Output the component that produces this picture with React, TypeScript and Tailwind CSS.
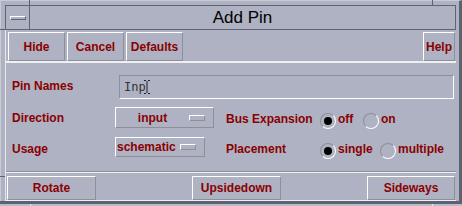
import React from "react";

const font = { fontFamily: '"Liberation Sans", Arial, sans-serif' };

function Btn({ label, className }: { label: string; className: string }) {
  return (
    <div
      className={`flex items-center justify-center border border-t-white border-l-white border-r-[#8e9099] border-b-[#8e9099] text-[12px] font-bold text-[#8b0000] ${className}`}
    >
      {label}
    </div>
  );
}

function OptionMenu({ label, className, center }: { label: string; className: string; center?: boolean }) {
  return (
    <div
      className={`flex items-center border border-t-white border-l-white border-r-[#8e9099] border-b-[#8e9099] text-[12px] font-bold text-[#8b0000] ${className}`}
    >
      <span className={center ? "flex-1 text-center" : "flex-1 pl-[1px]"}>{label}</span>
      <span className="mr-[8px] h-[6px] w-[16px] border border-t-white border-l-white border-r-[#8e9099] border-b-[#8e9099]" />
    </div>
  );
}

function Radio({ label, on, className }: { label: string; on?: boolean; className?: string }) {
  return (
    <div className={`flex items-start ${className ?? ""}`}>
      <span className="mt-[1px] flex h-[16px] w-[16px] items-center justify-center rounded-full border border-t-[#8e9099] border-l-[#8e9099] border-r-white border-b-white">
        {on ? <span className="h-[8px] w-[8px] rounded-full bg-black" /> : null}
      </span>
      <span className="ml-[2px] text-[12px] leading-[14px] font-bold text-[#8b0000]">{label}</span>
    </div>
  );
}

const label = "text-[12px] leading-[14px] font-bold text-[#8b0000]";

export default function App() {
  return (
    <div style={font} className="relative flex h-[206px] w-[462px] flex-col overflow-hidden bg-[#aeb2c3]">
      {/* window manager corner ticks */}
      <span className="absolute left-[29px] top-0 h-[5px] w-px bg-[#5d6170]" />
      <span className="absolute left-[432px] top-0 h-[5px] w-px bg-[#5d6170]" />
      <span className="absolute left-0 top-[29px] h-px w-[5px] bg-[#5d6170]" />
      <span className="absolute left-0 top-[176px] h-px w-[5px] bg-[#5d6170]" />
      <span className="absolute left-[30px] top-[204px] h-[2px] w-px bg-[#e8e9ef]" />
      <span className="absolute left-[432px] top-[204px] h-[2px] w-px bg-[#e8e9ef]" />

      <div className="flex h-[201px] border-l border-t border-l-[#c8cad5] border-t-[#c8cad5] border-r-[3px] border-r-[#5d6170] pl-[4px] pt-[4px] pr-[3px]">
        <div className="flex w-[451px] flex-col">
          {/* title bar */}
          <div className="flex h-[25px] border border-[#5f6373]">
            <div className="flex w-[24px] items-center justify-center border-r border-r-[#5f6373]">
              <span className="h-[4px] w-[16px] border border-t-white border-l-white border-r-[#5f6373] border-b-[#5f6373]" />
            </div>
            <div className="flex flex-1 items-center justify-center text-[17px] text-black">Add Pin</div>
          </div>

          {/* dialog body */}
          <div className="flex h-[171px] flex-col border-l border-l-[#e6e7ee]">
            <div className="flex h-[33px] items-start gap-[2px] border-b-2 border-b-[#eef0f4] pt-[2px] pl-[2px] pr-[1px]">
              <Btn label="Hide" className="h-[29px] w-[57px]" />
              <Btn label="Cancel" className="h-[29px] w-[57px]" />
              <Btn label="Defaults" className="h-[29px] w-[57px]" />
              <div className="flex-1" />
              <Btn label="Help" className="h-[29px] w-[32px]" />
            </div>

            <div className="flex h-[109px] flex-col border-b border-b-[#8e9099] pl-[6px]">
              <div className="mt-[12px] flex h-[24px] items-start">
                <span className={`mt-[4px] w-[107px] ${label}`}>Pin Names</span>
                <div className="flex h-[24px] w-[335px] items-center border border-t-[#8e9099] border-l-[#8e9099] border-r-white border-b-white pl-[4px]">
                  <span className="text-[12px] text-[#333]" style={{ fontFamily: '"DejaVu Sans Mono", monospace' }}>
                    Inp
                  </span>
                  <svg width="6" height="14" viewBox="0 0 6 14" className="ml-[-2px]">
                    <path d="M0 0.5H2M4 0.5H6M3 1V13M0 13.5H2M4 13.5H6" stroke="#222" strokeWidth="1" fill="none" />
                  </svg>
                </div>
              </div>

              <div className="mt-[8px] flex h-[21px] items-start">
                <span className={`mt-[4px] w-[103px] ${label}`}>Direction</span>
                <OptionMenu label="input" className="h-[21px] w-[99px]" center />
                <span className={`ml-[12px] mt-[5px] w-[94px] ${label}`}>Bus Expansion</span>
                <Radio label="off" on className="mt-[5px] w-[43px]" />
                <Radio label="on" className="mt-[5px]" />
              </div>

              <div className="mt-[9px] flex h-[20px] items-start">
                <span className={`mt-[5px] w-[103px] ${label}`}>Usage</span>
                <OptionMenu label="schematic" className="h-[20px] w-[90px]" />
                <span className={`ml-[21px] mt-[5px] w-[94px] ${label}`}>Placement</span>
                <Radio label="single" on className="mt-[5px] w-[60px]" />
                <Radio label="multiple" className="mt-[5px]" />
              </div>
            </div>

            <div className="flex h-[29px] items-start border-t border-t-[#eef0f4] border-b border-b-[#eef0f4] pt-[3px] pl-[1px] pr-[1px]">
              <Btn label="Rotate" className="h-[24px] w-[89px]" />
              <Btn label="Upsidedown" className="ml-[96px] h-[24px] w-[89px]" />
              <div className="flex-1" />
              <Btn label="Sideways" className="h-[24px] w-[88px]" />
            </div>
          </div>
        </div>
      </div>
      <div className="h-[3px] bg-[#5d6170]" />
      <div className="h-[2px] bg-[#b9bccb]" />
    </div>
  );
}
